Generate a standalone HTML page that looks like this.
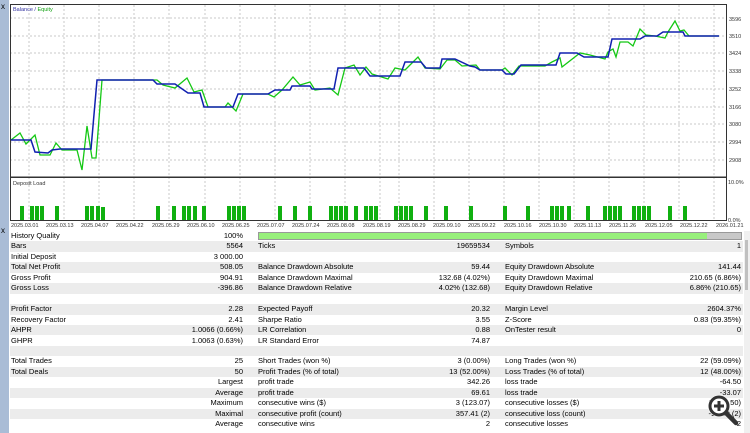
<!DOCTYPE html>
<html><head><meta charset="utf-8"><style>
*{margin:0;padding:0;box-sizing:border-box}
body{width:750px;height:433px;overflow:hidden;background:#fff;font-family:"Liberation Sans",sans-serif;font-size:7.5px;color:#000;position:relative}
.strip{position:absolute;left:0;top:0;width:9px;height:433px;background:#a9bcd6}
.row{position:absolute;left:10px;width:733px;height:10.45px;line-height:10.45px}
.g{background:#ececec}
.row span{position:absolute;white-space:nowrap}
.l1{left:1px}.v1{right:500px}.l2{left:248px}.v2{right:253px}.l3{left:495px}.v3{right:2px}
</style></head><body>
<div class="strip"></div>
<div style="position:absolute;left:1px;top:2px;font-size:8px">x</div>
<div style="position:absolute;left:1px;top:226px;font-size:8px">x</div>
<svg style="position:absolute;left:0;top:0" width="750" height="230">
<g stroke="#c8c8c8" stroke-width="1" stroke-dasharray="2,2">
<line x1="10" x2="726" y1="18" y2="18"/><line x1="10" x2="726" y1="36" y2="36"/><line x1="10" x2="726" y1="53" y2="53"/><line x1="10" x2="726" y1="71" y2="71"/><line x1="10" x2="726" y1="89" y2="89"/><line x1="10" x2="726" y1="107" y2="107"/><line x1="10" x2="726" y1="124" y2="124"/><line x1="10" x2="726" y1="142" y2="142"/><line x1="10" x2="726" y1="160" y2="160"/>
<line x1="29" x2="29" y1="5" y2="220"/><line x1="64" x2="64" y1="5" y2="220"/><line x1="99" x2="99" y1="5" y2="220"/><line x1="134" x2="134" y1="5" y2="220"/><line x1="169" x2="169" y1="5" y2="220"/><line x1="205" x2="205" y1="5" y2="220"/><line x1="240" x2="240" y1="5" y2="220"/><line x1="275" x2="275" y1="5" y2="220"/><line x1="310" x2="310" y1="5" y2="220"/><line x1="345" x2="345" y1="5" y2="220"/><line x1="380" x2="380" y1="5" y2="220"/><line x1="399" x2="399" y1="5" y2="220"/><line x1="434" x2="434" y1="5" y2="220"/><line x1="469" x2="469" y1="5" y2="220"/><line x1="504" x2="504" y1="5" y2="220"/><line x1="539" x2="539" y1="5" y2="220"/><line x1="574" x2="574" y1="5" y2="220"/><line x1="609" x2="609" y1="5" y2="220"/><line x1="644" x2="644" y1="5" y2="220"/><line x1="679" x2="679" y1="5" y2="220"/><line x1="714" x2="714" y1="5" y2="220"/>
</g>
<rect x="10.5" y="4.5" width="716" height="172.5" fill="none" stroke="#333"/>
<rect x="10.5" y="177.5" width="716" height="43" fill="none" stroke="#333"/>
<polyline fill="none" stroke="#14c814" stroke-width="1.3" points="11,140 20,133 26,144 35,135 40,155 50,155 56,143 62,150 77,150 82,170 87,126 92,158 96,158 102,80 157,80 163,85 175,88 187,78 194,92 202,90 208,107 225,107 228,103 236,111 243,94 268,94 274,97 282,90 293,77 300,85 310,82 315,90 330,88 338,95 345,68 354,65 360,75 366,67 372,74 388,79 395,68 405,70 418,57 425,68 440,69 447,60 455,60 462,66 476,65 480,70 502,70 505,68 512,75 519,66 545,66 552,62 560,58 562,67 580,53 590,55 605,59 608,52 613,49 616,57 620,42 628,42 633,46 640,29 646,35 655,36 665,38 668,32 675,21 680,31 684,30 689,36 719,36"/>
<polyline fill="none" stroke="#1020b0" stroke-width="1.5" points="11,140 31,140 35,152 48,153 52,150 60,149 91,149 97,80 153,80 157,84 175,84 188,93 200,93 204,107 233,107 238,94 268,94 275,90 290,90 292,86 310,86 312,89 334,89 338,68 364,68 370,76 400,76 405,62 421,62 426,68 440,68 442,59 455,59 470,66 475,67 480,70 502,70 506,74 514,74 521,65 556,65 560,53 577,53 584,57 608,57 612,39 640,39 645,36 657,36 663,32 683,32 685,36 719,36"/>
<g fill="#10b010">
<rect x="20" y="206" width="4" height="14"/><rect x="30" y="206" width="4" height="14"/><rect x="35" y="206" width="4" height="14"/><rect x="40" y="206" width="4" height="14"/><rect x="55" y="206" width="4" height="14"/><rect x="85" y="206" width="4" height="14"/><rect x="90" y="206" width="4" height="14"/><rect x="96" y="206" width="4" height="14"/><rect x="101" y="207" width="4" height="13"/><rect x="156" y="206" width="4" height="14"/><rect x="172" y="206" width="4" height="14"/><rect x="182" y="206" width="4" height="14"/><rect x="187" y="206" width="4" height="14"/><rect x="193" y="206" width="4" height="14"/><rect x="202" y="206" width="4" height="14"/><rect x="227" y="206" width="4" height="14"/><rect x="232" y="206" width="4" height="14"/><rect x="237" y="206" width="4" height="14"/><rect x="242" y="206" width="4" height="14"/><rect x="278" y="206" width="4" height="14"/><rect x="293" y="206" width="4" height="14"/><rect x="308" y="206" width="4" height="14"/><rect x="329" y="206" width="4" height="14"/><rect x="334" y="206" width="4" height="14"/><rect x="339" y="206" width="4" height="14"/><rect x="344" y="206" width="4" height="14"/><rect x="354" y="206" width="4" height="14"/><rect x="364" y="206" width="4" height="14"/><rect x="369" y="206" width="4" height="14"/><rect x="374" y="206" width="4" height="14"/><rect x="394" y="206" width="4" height="14"/><rect x="399" y="206" width="4" height="14"/><rect x="404" y="206" width="4" height="14"/><rect x="409" y="206" width="4" height="14"/><rect x="424" y="206" width="4" height="14"/><rect x="444" y="206" width="4" height="14"/><rect x="469" y="206" width="4" height="14"/><rect x="503" y="206" width="4" height="14"/><rect x="526" y="206" width="4" height="14"/><rect x="550" y="206" width="4" height="14"/><rect x="555" y="206" width="4" height="14"/><rect x="560" y="206" width="4" height="14"/><rect x="567" y="206" width="4" height="14"/><rect x="586" y="206" width="4" height="14"/><rect x="603" y="206" width="4" height="14"/><rect x="608" y="206" width="4" height="14"/><rect x="613" y="206" width="4" height="14"/><rect x="618" y="206" width="4" height="14"/><rect x="632" y="206" width="4" height="14"/><rect x="637" y="206" width="4" height="14"/><rect x="642" y="206" width="4" height="14"/><rect x="647" y="206" width="4" height="14"/><rect x="668" y="206" width="4" height="14"/><rect x="683" y="206" width="4" height="14"/>
</g>
<g font-family="Liberation Sans" font-size="5.5" fill="#333">
<text x="13" y="11" fill="#3030a0">Balance / <tspan fill="#10a010">Equity</tspan></text>
<text x="13" y="185">Deposit Load</text>
<text x="729" y="21">3596</text><text x="729" y="38">3510</text><text x="729" y="55">3424</text><text x="729" y="73">3338</text><text x="729" y="91">3252</text><text x="729" y="109">3166</text><text x="729" y="126">3080</text><text x="729" y="144">2994</text><text x="729" y="162">2908</text>
<text x="728" y="184">10.0%</text><text x="728" y="222">0.0%</text>
<text x="11" y="227">2025.03.01</text><text x="46" y="227">2025.03.13</text><text x="81" y="227">2025.04.07</text><text x="116" y="227">2025.04.22</text><text x="152" y="227">2025.05.29</text><text x="187" y="227">2025.06.10</text><text x="222" y="227">2025.06.25</text><text x="257" y="227">2025.07.07</text><text x="292" y="227">2025.07.24</text><text x="327" y="227">2025.08.08</text><text x="363" y="227">2025.08.19</text><text x="398" y="227">2025.08.29</text><text x="433" y="227">2025.09.10</text><text x="468" y="227">2025.09.22</text><text x="504" y="227">2025.10.16</text><text x="539" y="227">2025.10.30</text><text x="574" y="227">2025.11.13</text><text x="609" y="227">2025.11.26</text><text x="645" y="227">2025.12.05</text><text x="680" y="227">2025.12.22</text><text x="716" y="227">2026.01.21</text>
</g>
</svg>
<div style="position:absolute;left:744px;top:231px;width:6px;height:202px;background:#f0f0f0"></div>
<div style="position:absolute;left:745px;top:240px;width:3px;height:50px;background:#c0c0c0"></div>

<div class="row" style="top:231px"><span class="l1">History Quality</span><span class="v1">100%</span><div style="position:absolute;left:248px;top:1px;width:484px;height:8px;background:#c8c8c8;border:1px solid #999"><div style="width:448px;height:100%;background:#98f07c"></div></div></div>
<div class="row g" style="top:241.45px"><span class="l1">Bars</span><span class="v1">5564</span><span class="l2">Ticks</span><span class="v2">19659534</span><span class="l3">Symbols</span><span class="v3">1</span></div>
<div class="row" style="top:251.9px"><span class="l1">Initial Deposit</span><span class="v1">3 000.00</span></div>
<div class="row g" style="top:262.35px"><span class="l1">Total Net Profit</span><span class="v1">508.05</span><span class="l2">Balance Drawdown Absolute</span><span class="v2">59.44</span><span class="l3">Equity Drawdown Absolute</span><span class="v3">141.44</span></div>
<div class="row" style="top:272.8px"><span class="l1">Gross Profit</span><span class="v1">904.91</span><span class="l2">Balance Drawdown Maximal</span><span class="v2">132.68 (4.02%)</span><span class="l3">Equity Drawdown Maximal</span><span class="v3">210.65 (6.86%)</span></div>
<div class="row g" style="top:283.25px"><span class="l1">Gross Loss</span><span class="v1">-396.86</span><span class="l2">Balance Drawdown Relative</span><span class="v2">4.02% (132.68)</span><span class="l3">Equity Drawdown Relative</span><span class="v3">6.86% (210.65)</span></div>
<div class="row" style="top:293.7px"></div>
<div class="row g" style="top:304.15px"><span class="l1">Profit Factor</span><span class="v1">2.28</span><span class="l2">Expected Payoff</span><span class="v2">20.32</span><span class="l3">Margin Level</span><span class="v3">2604.37%</span></div>
<div class="row" style="top:314.6px"><span class="l1">Recovery Factor</span><span class="v1">2.41</span><span class="l2">Sharpe Ratio</span><span class="v2">3.55</span><span class="l3">Z-Score</span><span class="v3">0.83 (59.35%)</span></div>
<div class="row g" style="top:325.05px"><span class="l1">AHPR</span><span class="v1">1.0066 (0.66%)</span><span class="l2">LR Correlation</span><span class="v2">0.88</span><span class="l3">OnTester result</span><span class="v3">0</span></div>
<div class="row" style="top:335.5px"><span class="l1">GHPR</span><span class="v1">1.0063 (0.63%)</span><span class="l2">LR Standard Error</span><span class="v2">74.87</span></div>
<div class="row g" style="top:345.95px"></div>
<div class="row" style="top:356.4px"><span class="l1">Total Trades</span><span class="v1">25</span><span class="l2">Short Trades (won %)</span><span class="v2">3 (0.00%)</span><span class="l3">Long Trades (won %)</span><span class="v3">22 (59.09%)</span></div>
<div class="row g" style="top:366.85px"><span class="l1">Total Deals</span><span class="v1">50</span><span class="l2">Profit Trades (% of total)</span><span class="v2">13 (52.00%)</span><span class="l3">Loss Trades (% of total)</span><span class="v3">12 (48.00%)</span></div>
<div class="row" style="top:377.3px"><span class="v1">Largest</span><span class="l2">profit trade</span><span class="v2">342.26</span><span class="l3">loss trade</span><span class="v3">-64.50</span></div>
<div class="row g" style="top:387.75px"><span class="v1">Average</span><span class="l2">profit trade</span><span class="v2">69.61</span><span class="l3">loss trade</span><span class="v3">-33.07</span></div>
<div class="row" style="top:398.2px"><span class="v1">Maximum</span><span class="l2">consecutive wins ($)</span><span class="v2">3 (123.07)</span><span class="l3">consecutive losses ($)</span><span class="v3">2 (-98.50)</span></div>
<div class="row g" style="top:408.65px"><span class="v1">Maximal</span><span class="l2">consecutive profit (count)</span><span class="v2">357.41 (2)</span><span class="l3">consecutive loss (count)</span><span class="v3">-98.50 (2)</span></div>
<div class="row" style="top:419.1px"><span class="v1">Average</span><span class="l2">consecutive wins</span><span class="v2">2</span><span class="l3">consecutive losses</span><span class="v3">2</span></div>
<svg style="position:absolute;left:706px;top:393px" width="36" height="36"><circle cx="13" cy="13" r="11" fill="#fff" fill-opacity="0.9"/><circle cx="13" cy="13" r="9" fill="#fff" stroke="#333" stroke-width="3"/><path d="M8 13h10M13 8v10" stroke="#333" stroke-width="3"/><path d="M20 20l10 10" stroke="#333" stroke-width="4.5" stroke-linecap="round"/></svg>
</body></html>
